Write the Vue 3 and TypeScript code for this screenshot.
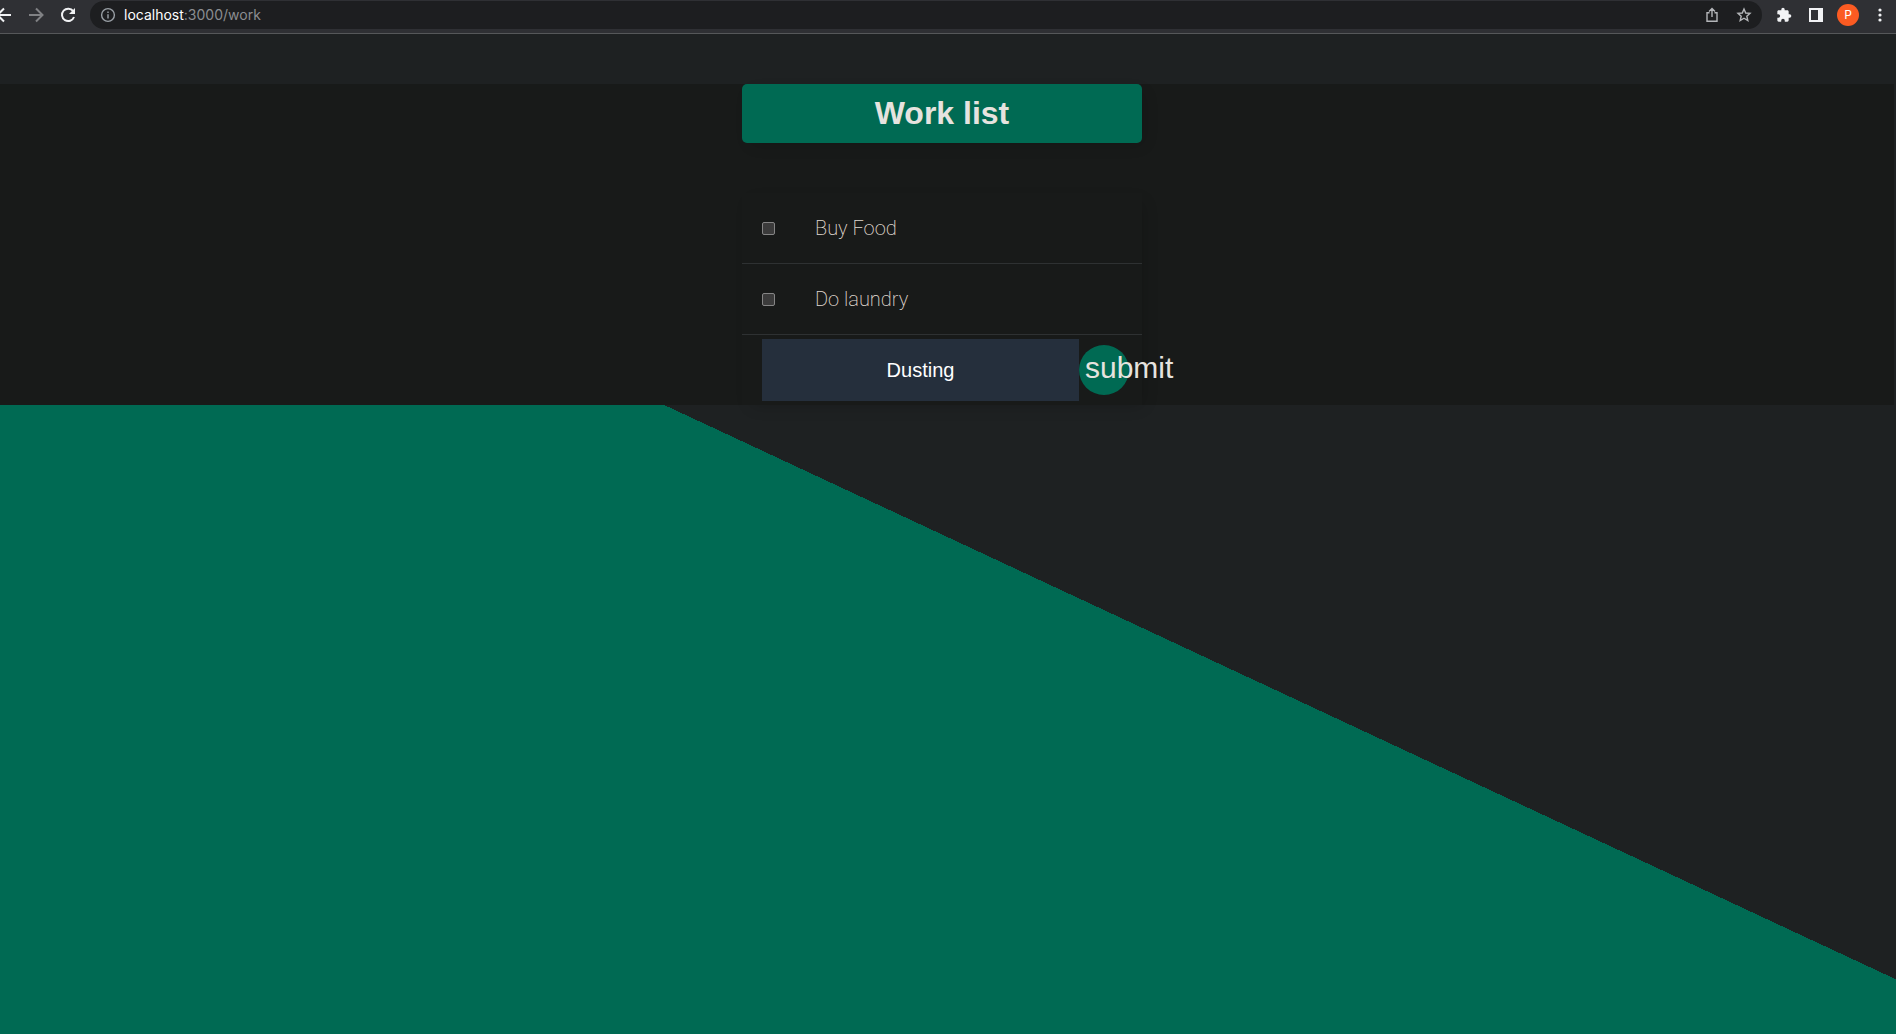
<script setup lang="ts">
import { ref } from 'vue'

interface Item {
  id: number
  name: string
  done: boolean
}

const title = ref('Work list')
const items = ref<Item[]>([
  { id: 1, name: 'Buy Food', done: false },
  { id: 2, name: 'Do laundry', done: false },
])
const newItem = ref('Dusting')

function addItem(): void {
  const name = newItem.value.trim()
  if (!name) return
  items.value.push({ id: items.value.length + 1, name, done: false })
  newItem.value = ''
}
</script>

<template>
  <div class="window">
    <header class="toolbar">
      <nav class="nav">
        <button type="button" class="tool" aria-label="Back">
          <svg viewBox="0 0 16 16" class="light"><path d="M15 8H2M8 1.500L1.500 8L8 14.500" /></svg>
        </button>
        <button type="button" class="tool" aria-label="Forward">
          <svg viewBox="0 0 16 16" class="dim"><path d="M1 8H14M8 1.500L14.500 8L8 14.500" /></svg>
        </button>
        <button type="button" class="tool" aria-label="Reload">
          <svg viewBox="0 0 16 16" class="light">
            <path d="M13.200 4.200A6.200 6.200 0 1 0 14 10" />
            <path d="M15 1V7H9Z" class="fill" />
          </svg>
        </button>
      </nav>

      <div class="address">
        <button type="button" class="tool" aria-label="Site information">
          <svg viewBox="0 0 16 16" class="info">
            <circle cx="8" cy="8" r="6.400" />
            <path d="M8 7.200V11.600M8 4.400V6" />
          </svg>
        </button>
        <div class="url"><span class="host">localhost</span>:3000/work</div>
        <button type="button" class="tool" aria-label="Share">
          <svg viewBox="0 0 16 16" class="grey">
            <path d="M5.500 5.800H3V14.300H13V5.800H10.500M8 10V2M5 4.600L8 1.600L11 4.600" />
          </svg>
        </button>
        <button type="button" class="tool" aria-label="Bookmark">
          <svg viewBox="0 0 16 16" class="grey">
            <path d="M8 2L9.700 6L14 6.400L10.800 9.200L11.800 13.500L8 11.200L4.200 13.500L5.200 9.200L2 6.400L6.300 6Z" />
          </svg>
        </button>
      </div>

      <div class="actions">
        <button type="button" class="tool" aria-label="Extensions">
          <svg viewBox="0 0 24 24">
            <path
              class="fill"
              d="M20.500 11H19V7c0-1.100-.9-2-2-2h-4V3.500a2.500 2.500 0 0 0-5 0V5H4c-1.100 0-2 .9-2 2v3.800h1.500a2.700 2.700 0 0 1 0 5.400H2V20c0 1.100.9 2 2 2h3.800v-1.500a2.700 2.700 0 0 1 5.400 0V22H17c1.100 0 2-.9 2-2v-4h1.500a2.500 2.500 0 0 0 0-5z"
            />
          </svg>
        </button>
        <button type="button" class="tool" aria-label="Side panel">
          <svg viewBox="0 0 16 16">
            <path class="fill" fill-rule="evenodd" d="M1 1H15V15H1ZM3 3V13H10V3Z" />
          </svg>
        </button>
        <button type="button" class="avatar" aria-label="Profile">P</button>
        <button type="button" class="tool" aria-label="Menu">
          <svg viewBox="0 0 16 16">
            <g class="fill">
              <circle cx="8" cy="3" r="1.600" />
              <circle cx="8" cy="8" r="1.600" />
              <circle cx="8" cy="13" r="1.600" />
            </g>
          </svg>
        </button>
      </div>
    </header>

    <main class="page">
      <section class="band">
        <h1 class="heading">{{ title }}</h1>
        <div class="list">
          <div v-for="item in items" :key="item.id" class="item">
            <input :id="`item-${item.id}`" v-model="item.done" type="checkbox" />
            <label :for="`item-${item.id}`">{{ item.name }}</label>
          </div>
          <form class="entry" @submit.prevent="addItem">
            <input v-model="newItem" type="text" aria-label="New item" autocomplete="off" />
            <button type="submit">submit</button>
          </form>
        </div>
      </section>
    </main>
  </div>
</template>

<style>
body {
  margin: 0;
  background: #1e2122;
}
</style>

<style scoped>
*,
*::before {
  box-sizing: border-box;
}

.window {
  display: flex;
  flex-direction: column;
  min-height: 100vh;
  overflow: hidden;
  font-family: 'Liberation Sans', Arial, sans-serif;
}

button {
  margin: 0;
  border: 0;
  font-family: inherit;
}

/* Browser toolbar */
.toolbar {
  display: flex;
  align-items: flex-start;
  height: 34px;
  padding-top: 1px;
  border-bottom: 1px solid #56585a;
  background: #2f3034;
}

.nav,
.actions {
  display: flex;
  align-items: center;
  height: 28px;
}

.nav {
  gap: 16px;
  margin-left: -4px;
  padding-right: 14px;
}

.actions {
  gap: 16px;
  padding: 0 8px 0 14px;
}

.tool {
  display: block;
  flex: none;
  width: 16px;
  height: 16px;
  padding: 0;
  background: none;
}

.tool svg {
  display: block;
  width: 100%;
  height: 100%;
  fill: none;
  stroke-width: 2;
}

.tool .light {
  stroke: #f1f2f4;
}

.tool .dim {
  stroke: #808184;
}

.tool .grey {
  stroke: #b4b6b9;
  stroke-width: 1.4;
}

.tool .info {
  stroke: #9aa0a6;
  stroke-width: 1.4;
}

.tool .fill {
  fill: #f1f2f4;
  stroke: none;
}

.address {
  display: flex;
  flex: 1;
  align-items: center;
  gap: 16px;
  height: 28px;
  padding: 0 10px;
  border-radius: 14px;
  background: #1d1e20;
}

.url {
  flex: 1;
  margin-left: -8px;
  color: #8b8d90;
  font-family: Inter, sans-serif;
  font-size: 14px;
  line-height: 20px;
}

.host {
  color: #fff;
}

.avatar {
  width: 22px;
  height: 22px;
  margin: 0 -3px;
  padding: 0;
  border-radius: 50%;
  background: #fb5b22;
  color: #fff;
  font-family: Inter, sans-serif;
  font-size: 12px;
  line-height: 22px;
}

/* Page */
.page {
  flex: 1;
  padding: 50px 2px 0 0;
  background: linear-gradient(25deg, #006a53 calc(50% - 3px), #1e2122 calc(50% - 3px));
}

.band {
  display: flex;
  flex-direction: column;
  align-items: center;
  gap: 50px;
  padding-right: 10px;
  background: #181a19;
}

.heading,
.list {
  width: 400px;
  max-width: 100%;
  box-shadow: 5px 5px 15px -5px rgba(0, 0, 0, 0.2);
}

.heading {
  margin: 0;
  padding: 10px;
  border-radius: 5px;
  background: #006a53;
  color: #e6e3df;
  font-size: 32px;
  line-height: 39px;
  text-align: center;
}

.item {
  display: flex;
  align-items: center;
  gap: 40px;
  height: 71px;
  padding: 0 20px;
  border-bottom: 1px solid #2e3132;
}

.item input {
  width: 13px;
  height: 13px;
  margin: 0;
  appearance: none;
  border: 1px solid #858585;
  border-radius: 2px;
  background: #3b3b3b;
}

.item input:checked {
  background: #006a53;
}

.item label {
  color: #e0dad2;
  font-family: Roboto, sans-serif;
  font-size: 20px;
  font-weight: 200;
  line-height: 24px;
}

.entry {
  display: flex;
  align-items: center;
  height: 70px;
  padding-left: 20px;
}

.entry input {
  width: 317px;
  height: 62px;
  padding: 0;
  border: 0;
  border-radius: 0;
  outline: 0;
  background: #252f3c;
  color: #fff;
  font-family: inherit;
  font-size: 20px;
  text-align: center;
}

.entry button {
  flex: none;
  width: 50px;
  height: 50px;
  padding: 0 6px 4px;
  border-radius: 50%;
  background: #006a53;
  color: #e6e3df;
  font-size: 30px;
  line-height: 34px;
  text-align: left;
  white-space: nowrap;
}
</style>
